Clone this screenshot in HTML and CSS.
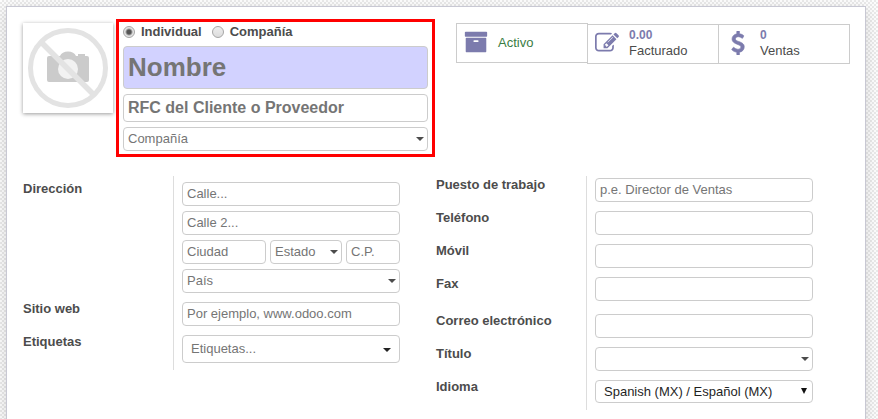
FILE: index.html
```html
<!DOCTYPE html>
<html lang="es">
<head>
<meta charset="utf-8">
<title>Clientes</title>
<link rel="stylesheet" href="styles.css">
</head>
<body>
<form class="sheet">
  <header class="header">
    <div class="photo">
      <svg viewBox="0 0 90 90" role="img" aria-label="Sin imagen">
        <path d="M24 35q0-2 2-2h11q2-4.500 8-4.500t8 4.500h2v-2h7v2h2q2 0 2 2v22q0 2-2 2H26q-2 0-2-2z" fill="#cbcbcb"/>
        <circle cx="45" cy="46" r="10" fill="#f2f2f2"/>
        <circle cx="45" cy="45" r="37.500" fill="none" stroke="#e3e3e3" stroke-width="5"/>
        <path d="M18 19l53 53" stroke="#e3e3e3" stroke-width="5.500"/>
      </svg>
    </div>
    <div class="title">
      <div class="types">
        <label class="type"><input type="radio" name="tipo" checked>Individual</label>
        <label class="type"><input type="radio" name="tipo">Compañía</label>
      </div>
      <input class="input input-name" type="text" placeholder="Nombre" aria-label="Nombre">
      <input class="input input-rfc" type="text" placeholder="RFC del Cliente o Proveedor" aria-label="RFC">
      <div class="combo">
        <input class="input" type="text" placeholder="Compañía" aria-label="Compañía">
        <svg class="caret" viewBox="0 0 8 4"><path d="M0 0h8L4 4z"/></svg>
      </div>
    </div>
    <div class="stats">
      <button class="stat stat-active" type="button">
        <svg class="icon" viewBox="0 0 1792 1792"><path d="M1088 832q0-26-19-45t-45-19h-256q-26 0-45 19t-19 45 19 45 45 19h256q26 0 45-19t19-45zm576-192v960q0 26-19 45t-45 19h-1408q-26 0-45-19t-19-45v-960q0-26 19-45t45-19h1408q26 0 45 19t19 45zm64-448v256q0 26-19 45t-45 19h-1536q-26 0-45-19t-19-45v-256q0-26 19-45t45-19h1536q26 0 45 19t19 45z"/></svg>
        <span class="stat-text">Activo</span>
      </button>
      <button class="stat" type="button">
        <svg class="icon" viewBox="0 0 1792 1792"><path d="M888 1184l116-116-152-152-116 116v56h96v96h56zm440-720q-16-16-33 1l-350 350q-17 17-1 33t33-1l350-350q17-17 1-33zm80 594v190q0 119-84.5 203.5t-203.5 84.5h-832q-119 0-203.5-84.5t-84.5-203.5v-832q0-119 84.5-203.5t203.5-84.5h832q63 0 117 25 15 7 18 23 3 17-9 29l-49 49q-14 14-32 8-23-6-45-6h-832q-66 0-113 47t-47 113v832q0 66 47 113t113 47h832q66 0 113-47t47-113v-126q0-13 9-22l64-64q15-15 35-7t20 29zm-96-738l288 288-672 672h-288v-288zm444 132l-92 92-288-288 92-92q28-28 68-28t68 28l152 152q28 28 28 68t-28 68z"/></svg>
        <span class="stat-text"><b class="stat-value">0.00</b>Facturado</span>
      </button>
      <button class="stat" type="button">
        <svg class="icon icon-bold" viewBox="0 0 1792 1792"><path d="M1362 1185q0 153-99.5 263.5t-258.5 136.5v175q0 14-9 23t-23 9h-135q-13 0-22.5-9.5t-9.5-22.5v-175q-66-9-127.5-31t-101.5-44.5-74-48-46.5-37.5-17.5-18q-17-21-2-41l103-135q7-10 23-12 15-2 24 9l2 2q113 99 243 125 37 8 74 8 81 0 142.5-43t61.5-122q0-28-15-53t-33.5-42-58.5-37.5-66-32-80-32.5q-39-16-61.5-25t-61.5-26.5-62.5-31-56.5-35.5-53.5-42.5-43.5-49-35.5-58-21-66.5-8.5-78q0-138 98-242t255-134v-180q0-13 9.5-22.5t22.5-9.5h135q14 0 23 9t9 23v176q57 6 110.5 23t87 33.5 63.5 37.5 39 29 15 14q17 18 5 38l-81 146q-8 15-23 16-14 3-27-7-3-3-14.5-12t-39-26.5-58.5-32-74.5-26-85.5-11.5q-95 0-155 43t-60 111q0 26 8.5 48t29.5 41.5 39.5 33 56 31 60.5 27 70 27.5q53 20 81 31.5t76 35 75.5 42.5 62 50 53 63.5 31.5 76.5 13 94z"/></svg>
        <span class="stat-text"><b class="stat-value">0</b>Ventas</span>
      </button>
    </div>
  </header>

  <div class="groups">
    <div class="group">
      <div class="row row-address">
        <label class="label" for="calle">Dirección</label>
        <div class="field">
          <input class="input" id="calle" type="text" placeholder="Calle...">
          <input class="input" type="text" placeholder="Calle 2..." aria-label="Calle 2">
          <div class="city-line">
            <input class="input" type="text" placeholder="Ciudad" aria-label="Ciudad">
            <div class="combo">
              <input class="input" type="text" placeholder="Estado" aria-label="Estado">
              <svg class="caret" viewBox="0 0 8 4"><path d="M0 0h8L4 4z"/></svg>
            </div>
            <input class="input" type="text" placeholder="C.P." aria-label="C.P.">
          </div>
          <div class="combo">
            <input class="input" type="text" placeholder="País" aria-label="País">
            <svg class="caret" viewBox="0 0 8 4"><path d="M0 0h8L4 4z"/></svg>
          </div>
        </div>
      </div>
      <div class="row">
        <label class="label" for="web">Sitio web</label>
        <div class="field"><input class="input" id="web" type="text" placeholder="Por ejemplo, www.odoo.com"></div>
      </div>
      <div class="row">
        <label class="label" for="etiquetas">Etiquetas</label>
        <div class="field">
          <div class="combo combo-tags">
            <input class="input" id="etiquetas" type="text" placeholder="Etiquetas...">
            <svg class="caret" viewBox="0 0 8 4"><path d="M0 0h8L4 4z"/></svg>
          </div>
        </div>
      </div>
    </div>

    <div class="group">
      <div class="row row-job">
        <label class="label" for="puesto">Puesto de trabajo</label>
        <div class="field"><input class="input" id="puesto" type="text" placeholder="p.e. Director de Ventas"></div>
      </div>
      <div class="row">
        <label class="label" for="telefono">Teléfono</label>
        <div class="field"><input class="input" id="telefono" type="text"></div>
      </div>
      <div class="row">
        <label class="label" for="movil">Móvil</label>
        <div class="field"><input class="input" id="movil" type="text"></div>
      </div>
      <div class="row row-fax">
        <label class="label" for="fax">Fax</label>
        <div class="field"><input class="input" id="fax" type="text"></div>
      </div>
      <div class="row">
        <label class="label" for="correo">Correo electrónico</label>
        <div class="field"><input class="input" id="correo" type="email"></div>
      </div>
      <div class="row">
        <label class="label" for="titulo">Título</label>
        <div class="field">
          <div class="combo">
            <input class="input" id="titulo" type="text">
            <svg class="caret" viewBox="0 0 8 4"><path d="M0 0h8L4 4z"/></svg>
          </div>
        </div>
      </div>
      <div class="row">
        <label class="label" for="idioma">Idioma</label>
        <div class="field">
          <div class="combo combo-select">
            <select class="input" id="idioma"><option>Spanish (MX) / Español (MX)</option></select>
            <svg class="caret" viewBox="0 0 6 6"><path d="M0 0h6L3 6z"/></svg>
          </div>
        </div>
      </div>
    </div>
  </div>
</form>
</body>
</html>
```
FILE: styles.css
```css
* {
  box-sizing: border-box;
}

body {
  margin: 0;
  padding: 6px 12px 0 6px;
  min-height: 100vh;
  display: flex;
  overflow: hidden;
  background: repeating-conic-gradient(#e9e9e9 0 25%, #fcfcfc 0 50%) 0 0 / 4px 4px;
  color: #4c4c4c;
  font: 13px/14px "Liberation Sans", Arial, sans-serif;
}

.sheet {
  flex: 1;
  padding: 12px 16px 0;
  border: 1px solid #c8c8d3;
  border-bottom: 0;
  background: #fff;
  box-shadow: 0 4px 12px rgba(0, 0, 0, 0.15);
}

.header {
  display: flex;
  align-items: flex-start;
  margin-bottom: 19px;
}

.photo {
  width: 90px;
  height: 90px;
  margin: 4px 3px 0 0;
  background: #fff;
  box-shadow: 0 1px 4px rgba(0, 0, 0, 0.4);
}

.photo svg {
  display: block;
}

.title {
  display: flex;
  flex-direction: column;
  gap: 5px;
  width: 319px;
  padding: 3px 4px;
  border: 3px solid #f00;
}

.types {
  display: flex;
  gap: 10px;
  height: 16px;
}

.type {
  display: flex;
  align-items: center;
  gap: 6px;
  height: 14px;
  font-weight: bold;
}

.type input {
  appearance: none;
  width: 12px;
  height: 12px;
  margin: 0;
  border: 1px solid #a6a6a6;
  border-radius: 50%;
  background: linear-gradient(#eee, #dcdcdc);
}

.type input:checked {
  background: radial-gradient(circle, #555 0 2px, #e4e4e4 4px);
}

.input {
  display: block;
  width: 100%;
  min-width: 0;
  height: 24px;
  margin: 0;
  padding: 0 4px 2px;
  border: 1px solid #ccc;
  border-radius: 4px;
  background: #fff;
  color: #1f1f1f;
  font: inherit;
}

.input::placeholder {
  color: #757575;
  opacity: 1;
}

.input-name {
  height: 43px;
  padding-bottom: 0;
  background: #d2d2ff;
  font-size: 26px;
  font-weight: bold;
  line-height: 30px;
}

.input-rfc {
  height: 28px;
  padding-bottom: 0;
  font-size: 16px;
  font-weight: bold;
  line-height: 18px;
}

.combo {
  position: relative;
}

.caret {
  position: absolute;
  top: 10px;
  right: 4px;
  width: 8px;
  height: 4px;
  fill: #4c4c4c;
  pointer-events: none;
}

.combo-tags .input {
  height: 28px;
  padding: 0 8px 2px;
}

.combo-tags .caret {
  top: 13px;
  right: 9px;
  fill: #222;
}

.combo-select .input {
  appearance: none;
  height: 23px;
  padding: 0 8px;
}

.combo-select .caret {
  top: 8px;
  right: 6px;
  width: 6px;
  height: 6px;
  fill: #111;
}

.stats {
  display: flex;
  align-items: flex-start;
  margin: 5px 0 0 auto;
}

.stat {
  display: flex;
  align-items: center;
  gap: 10px;
  width: 132px;
  height: 40px;
  margin: 0 -1px 0 0;
  padding: 0 7px 2px;
  border: 1px solid #ccc;
  background: #fff;
  color: #4c4c4c;
  font: inherit;
  line-height: 15px;
  text-align: left;
}

.stat-active {
  margin-top: -1px;
  color: #3a7d44;
}

.stat-value {
  display: block;
  color: #7c7bad;
  font-size: 12px;
}

.icon {
  flex: none;
  width: 24px;
  height: 24px;
  fill: #7c7bad;
}

.icon-bold {
  stroke: #7c7bad;
  stroke-width: 48;
}

.groups {
  display: flex;
  align-items: flex-start;
}

.group {
  flex: 1;
}

.row {
  display: grid;
  grid-template-columns: 150px 1fr;
}

.label {
  padding-top: 5px;
  font-weight: bold;
}

.field {
  display: flex;
  flex-direction: column;
  gap: 5px;
  padding: 5px 36px 4px 8px;
  border-left: 1px solid #ddd;
}

.row-address > * {
  padding-top: 6px;
}

.row-job > * {
  padding-top: 2px;
}

.row-fax > .field {
  padding-bottom: 8px;
}

.row:last-child > .field {
  padding-bottom: 7px;
}

.city-line {
  display: grid;
  grid-template-columns: 1fr 72px 54px;
  gap: 4px;
}
```
